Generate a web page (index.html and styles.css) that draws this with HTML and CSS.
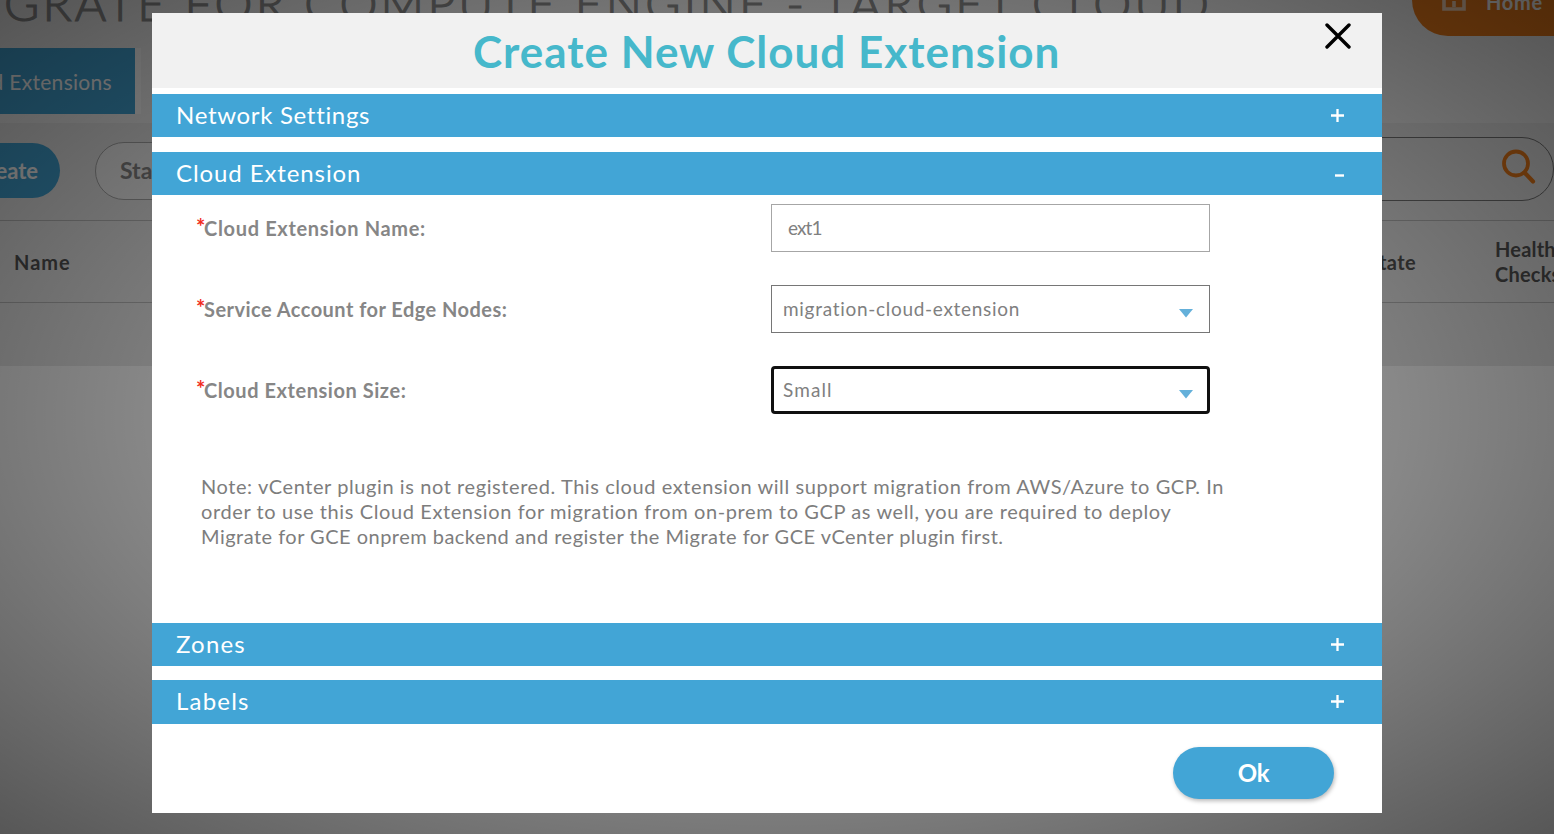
FILE: index.html
```html
<!DOCTYPE html>
<html lang="en">
<head>
<meta charset="utf-8">
<title>Create New Cloud Extension</title>
<link rel="stylesheet" href="styles.css">
</head>
<body>
<div class="page">
  <header class="page-header">
    <h1 class="page-title">GRATE FOR COMPUTE ENGINE - TARGET CLOUD</h1>
    <a class="home"><svg class="home-icon" viewBox="0 0 24 28"><path d="M2 11V26H22V11M1 13L12 3L23 13M12 24V18" fill="none" stroke="currentColor" stroke-width="3.6"/></svg><span>Home</span></a>
  </header>
  <nav class="tabs"><a class="tab">Cloud Extensions</a></nav>
  <div class="toolbar">
    <button class="create">Create</button>
    <button class="start">Start</button>
    <div class="search">
      <svg class="search-icon" viewBox="0 0 34 36"><circle cx="14" cy="14.5" r="12" fill="none" stroke="currentColor" stroke-width="3.8"/><path d="M22.5 23.5L31 32.5" stroke="currentColor" stroke-width="4.2" stroke-linecap="round"/></svg>
    </div>
  </div>
  <div class="table-head">
    <span class="col-name">Name</span>
    <span class="col-state">State</span>
    <span class="col-health">Health Checks</span>
  </div>
  <div class="table-empty"></div>
</div>
<div class="overlay">
  <section class="modal">
    <header class="modal-header">
      <h2 class="modal-title">Create New Cloud Extension</h2>
      <svg class="close" viewBox="0 0 26 26"><path d="M2 2L24 24M24 2L2 24" stroke="#000" stroke-width="3.4" stroke-linecap="round"/></svg>
    </header>
    <div class="bar network"><span class="bar-text network-text">Network Settings</span><svg class="sign" viewBox="0 0 13 13"><path d="M0 6.5H13M6.5 0V13" stroke="#fff" stroke-width="2.3"/></svg></div>
    <div class="bar extension"><span class="bar-text">Cloud Extension</span><svg class="sign" viewBox="0 0 13 13"><path d="M4 8.5H13" stroke="#fff" stroke-width="2.4"/></svg></div>
    <div class="form">
      <div class="row"><label class="label name-label"><span class="star">*</span>Cloud Extension Name:</label><div class="field input">ext1</div></div>
      <div class="row"><label class="label"><span class="star">*</span>Service Account for Edge Nodes:</label><div class="field select"><span class="value">migration-cloud-extension</span><svg class="arrow" viewBox="0 0 14 9"><path d="M0 0H14L7 8.5Z" fill="#64b0da"/></svg></div></div>
      <div class="row"><label class="label size-label"><span class="star">*</span>Cloud Extension Size:</label><div class="field select focused"><span class="value small">Small</span><svg class="arrow" viewBox="0 0 14 9"><path d="M0 0H14L7 8.5Z" fill="#64b0da"/></svg></div></div>
      <p class="note">Note: vCenter plugin is not registered. This cloud extension will support migration from AWS/Azure to GCP. In<br><span class="note-middle">order to use this Cloud Extension for migration from on-prem to GCP as well, you are required to deploy</span><br><span class="note-end">Migrate for GCE onprem backend and register the Migrate for GCE vCenter plugin first.</span></p>
    </div>
    <div class="bar zones"><span class="bar-text short">Zones</span><svg class="sign" viewBox="0 0 13 13"><path d="M0 6.5H13M6.5 0V13" stroke="#fff" stroke-width="2.3"/></svg></div>
    <div class="bar labels"><span class="bar-text short">Labels</span><svg class="sign" viewBox="0 0 13 13"><path d="M0 6.5H13M6.5 0V13" stroke="#fff" stroke-width="2.3"/></svg></div>
    <footer class="modal-footer"><button class="ok">Ok</button></footer>
  </section>
</div>
</body>
</html>
```
FILE: styles.css
```css
* { box-sizing: border-box; }
body { margin: 0; width: 1554px; height: 834px; overflow: hidden; position: relative; font-family: Lato, "Open Sans", sans-serif; background: #fff; }
h1, h2, p { margin: 0; }
button { font-family: inherit; border: 0; padding: 0; }

.page { height: 834px; overflow: hidden; }
.page-header { height: 48px; display: flex; justify-content: space-between; align-items: flex-start; background: #f5f5f5; }
.page-title { margin: -21px 0 0 4px; font-size: 48px; line-height: 48px; font-weight: 300; letter-spacing: 3.22px; color: #8f8f8f; -webkit-text-stroke: 1.2px #8f8f8f; white-space: nowrap; }
.home { width: 142px; height: 72px; margin-top: -36px; padding: 4px 0 0 30px; display: flex; align-items: center; gap: 20px; border-radius: 36px 0 0 36px; background: #ef7d1a; color: #fff; font-size: 20px; font-weight: 700; letter-spacing: .74px; }
.home-icon { width: 24px; height: 28px; margin-top: -10px; opacity: .7; }
.tabs { height: 75px; background: #f5f5f5; }
.tab { width: 141px; height: 66px; padding-right: 23px; display: flex; align-items: center; justify-content: flex-end; overflow: hidden; white-space: nowrap; border-right: 6px solid #fff; background: #42a5d6; color: #fff; font-size: 21px; letter-spacing: .3px; }
.toolbar { height: 97px; display: flex; align-items: flex-start; background: #eaeaea; }
.create { width: 60px; height: 55px; margin-top: 20px; padding: 0 22px 1px 0; display: flex; align-items: center; justify-content: flex-end; overflow: hidden; border-radius: 0 28px 28px 0; background: #42a5d6; color: #fff; font-size: 22px; font-weight: 700; }
.start { width: 155px; height: 58px; margin: 19px 0 0 35px; padding: 0 0 2px 24px; text-align: left; border: 1px solid #aaa; border-radius: 29px; background: #f6f6f6; color: #888; font-size: 23px; font-weight: 700; }
.search { width: 260px; height: 64px; margin: 14px 0 0 auto; padding: 11px 17px; display: flex; justify-content: flex-end; border: 1px solid #777; border-radius: 32px; color: #ef7d1a; }
.search-icon { width: 34px; height: 36px; }
.table-head { height: 83px; padding-top: 1px; display: flex; align-items: center; border: solid #bbb; border-width: 1px 0; background: #eaeaea; color: #555; font-size: 20px; line-height: 25px; font-weight: 700; }
.col-name { width: 1368px; padding-left: 14px; letter-spacing: 1px; }
.col-state { width: 127px; letter-spacing: .4px; }
.col-health { width: 59px; letter-spacing: .2px; }
.table-empty { height: 63px; background: #eaeaea; }

.overlay { position: absolute; inset: 0; padding: 13px 172px 21px 152px; background: radial-gradient(rgba(0, 0, 0, .22), rgba(0, 0, 0, .66)); }
.modal { height: 800px; background: #fff; }
.modal-header { height: 75px; margin-bottom: 6px; display: flex; align-items: flex-start; background: #f1f1f1; }
.modal-title { width: 1173px; padding: 12px 0 0 321px; font-size: 44px; line-height: 53px; font-weight: 700; letter-spacing: 1px; color: #46b8cb; white-space: nowrap; }
.close { width: 26px; height: 26px; margin-top: 10px; }
.bar { height: 43px; padding: 0 38px 0 24px; display: flex; align-items: center; justify-content: space-between; background: #42a5d6; color: #fff; }
.bar-text { padding-bottom: 2px; font-size: 24px; line-height: 41px; letter-spacing: .9px; }
.network-text { letter-spacing: .68px; }
.short { letter-spacing: 1.2px; }
.sign { width: 13px; height: 13px; }
.network { margin-bottom: 15px; }
.zones { margin-bottom: 14px; }
.labels { height: 44px; padding-bottom: 1px; }
.form { height: 428px; padding: 9px 0 0 44px; }
.row { height: 48px; margin-bottom: 33px; display: flex; align-items: center; }
.label { width: 575px; padding-bottom: 1px; display: flex; font-size: 20px; line-height: 24px; font-weight: 700; letter-spacing: .46px; color: #868686; }
.name-label { letter-spacing: .67px; }
.size-label { letter-spacing: .55px; }
.star { width: 8px; color: #f12c1c; font-size: 22px; line-height: 22px; letter-spacing: 0; }
.field { width: 439px; height: 48px; display: flex; align-items: center; justify-content: space-between; background: #fff; color: #808080; font-size: 19px; }
.input { padding: 0 0 2px 16px; border: 1px solid #a6a6a6; letter-spacing: -.9px; }
.select { padding: 0 16px 0 11px; border: 1px solid #767676; letter-spacing: .7px; }
.value { padding-bottom: 2px; }
.focused { border: 3px solid #101010; border-radius: 4px; padding: 0 14px 0 9px; }
.small { letter-spacing: 1.1px; }
.arrow { width: 14px; height: 9px; margin-top: 8px; }
.note { padding: 27px 0 0 5px; font-size: 20px; line-height: 25px; letter-spacing: .58px; color: #7d7d7d; white-space: nowrap; }
.note-middle { letter-spacing: .6px; }
.note-end { letter-spacing: .48px; }
.modal-footer { padding: 23px 48px 0 0; display: flex; justify-content: flex-end; }
.ok { width: 161px; height: 52px; padding-bottom: 2px; border-radius: 26px; background: #42a5d6; color: #fff; font-size: 24px; font-weight: 700; letter-spacing: -.3px; box-shadow: 1px 2px 4px rgba(0, 0, 0, .28); }
```
